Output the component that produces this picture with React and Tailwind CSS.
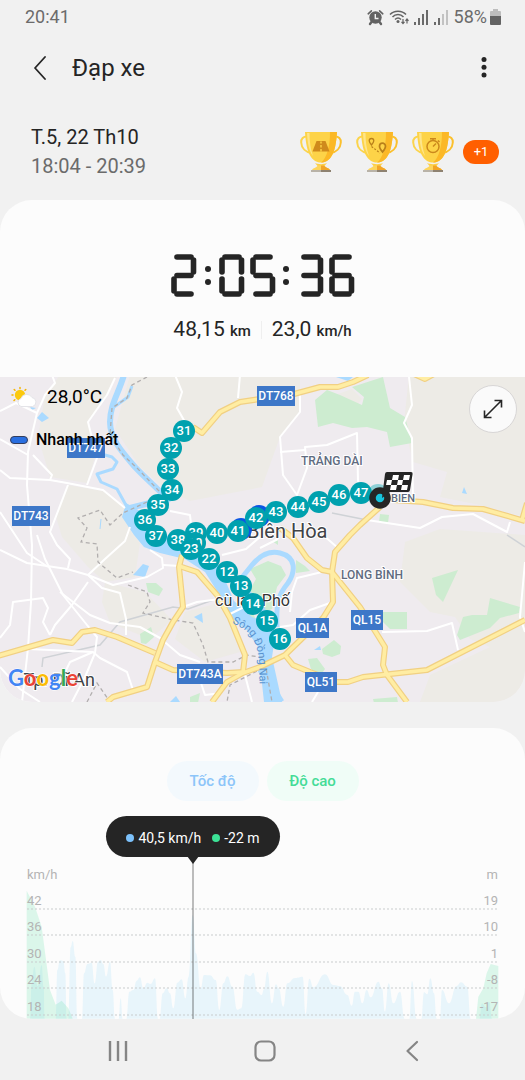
import { clsx } from 'clsx';

const SEGMENTS = {
  a: [6, 3, 20, 3],
  b: [22.5, 6, 22.5, 18],
  c: [22.5, 25, 22.5, 37],
  d: [6, 40, 20, 40],
  e: [3, 25, 3, 37],
  f: [3, 6, 3, 18],
  g: [6, 21.5, 20, 21.5],
};

const DIGITS = {
  0: 'abcdef',
  2: 'abdeg',
  3: 'abcdg',
  5: 'acdfg',
  6: 'acdefg',
};

const CLOCK = [
  { digit: 2, x: 0 },
  { digit: 0, x: 48 },
  { digit: 5, x: 79 },
  { digit: 3, x: 127 },
  { digit: 6, x: 158 },
];

const MINOR_ROADS = [
  'M52,-2 L55,6 45,18 37,36 28,75 27,108 32,168 31,225 28,271 22,325',
  'M0,93 L10,101 50,103 67,106 103,113 125,131',
  'M115,1 L107,18 88,45 97,81 87,108',
  'M0,62 L28,78 M33,78 L52,98 50,103',
  'M0,34 L16,26 37,36',
  'M68,108 L50,155 57,168 70,182 68,191',
  'M175,-2 L182,15 177,31 185,45',
  'M240,-2 L238,21',
  'M170,134 L190,138 192,155',
  'M0,173 L27,186 67,192 88,198 102,211 120,216 126,242 126,258',
  'M37,158 L45,182 63,218 87,248 97,260 95,276 85,300 72,325',
  'M0,135 L27,176 48,190',
  'M88,198 L105,182 125,164 130,150',
  'M88,198 L113,208 147,200 163,191 162,181 150,173',
  'M60,215 L90,238 110,246 140,250 160,261 180,278 200,285',
  'M88,205 L72,228 55,248 50,258',
  'M0,261 L10,248 13,225 43,221 48,231 43,245 50,258',
  'M28,272 L93,275 100,281 127,295 133,313',
  'M93,275 L70,285 58,310',
  'M163,188 L180,189',
  'M183,230 L197,225 220,222',
  'M245,298 L252,325',
  'M0,290 L20,312 40,325',
  'M200,303 L205,318 222,316',
  'M300,18 L300,35 280,60 283,98 297,118 307,91 305,70 327,68 357,56 358,105',
  'M280,75 L305,73',
  'M409,0 L412,28 404,46 412,61 413,125',
  'M367,143 L420,151 442,140 473,137 507,155 510,145',
  'M382,255 L427,254 452,246 458,273',
  'M525,185 L520,240 525,255',
  'M330,226 L310,233 293,248 280,250',
  'M322,195 L297,201 292,215 290,235',
  'M323,158 L338,171',
  'M260,171 L278,162',
  'M228,238 L244,230',
  'M318,315 L312,325',
  'M222,178 L246,172 260,160',
];

const MAIN_ROADS = [
  'M193,50 L202,56 220,35 240,25 260,22 294,17 320,10 338,10 353,5 368,-2',
  'M414,-3 L425,2 434,-3',
  'M393,123 L423,125 453,131 483,132 525,144',
  'M527,126 L522,143',
  'M380,130 L360,148 350,158 335,175 332,195 333,225 323,241 285,278 260,290 243,296 227,305 212,325',
  'M280,151 L293,161 307,181 322,193 332,195 360,230 385,270 383,288 387,298 407,325',
  'M285,278 L293,288 310,295 337,305 348,305 363,300 427,293 525,243',
  'M-2,279 L53,263 72,266 82,255 95,253 117,260 155,276',
  'M182,178 L179,190 183,230 173,245 163,263 155,285 147,310 130,315 113,320 107,325',
  'M179,189 L197,195 217,218 230,241 245,278 243,295',
  'M155,285 L173,293 227,296 243,295',
];

const DASHED_LINES = [
  'M147,0 L132,8 127,21 112,31 110,58 123,78 137,91 160,115',
  'M147,125 L123,136 110,148 100,133 78,141 87,151 81,165 97,167 98,185 117,201 133,195',
  'M128,208 L147,215 150,225 143,236 173,243 193,246 203,268 208,285 233,285 247,278 265,281',
  'M263,291 L230,308 227,325',
  'M87,325 L97,306 110,325',
  'M265,285 L272,325',
];

const RAILS = ['M42,290 L43,281 L100,268 120,245 173,230 188,232 213,223', 'M332,136 L367,143', 'M507,158 L525,170'];

const COUNTRYSIDE = [
  'M130,-2 L300,-2 300,35 280,60 262,110 190,124 165,112 140,90 115,52 Z',
  'M60,-2 L118,-2 105,20 88,45 95,80 87,106 50,100 38,60 45,18 Z',
  'M68,108 L103,114 125,131 128,150 140,166 135,200 105,205 88,190 62,160 56,140 Z',
  'M409,-2 L525,-2 525,140 480,128 440,120 447,95 413,85 404,46 Z',
  'M405,165 L440,152 525,158 525,325 420,325 430,298 490,270 470,262 455,240 430,235 400,205 Z',
  'M105,205 L145,215 172,243 150,262 110,246 102,225 Z',
  'M185,235 L222,225 240,275 205,285 175,262 Z',
  'M338,17 L352,12 362,22 357,28 343,22 Z',
];

const PARKS = [
  'M315,23 L327,13 340,18 362,28 364,20 352,10 383,0 390,31 405,40 412,66 390,70 387,55 367,50 352,51 333,46 318,50 Z',
  'M432,201 L458,193 443,225 436,218 Z',
  'M457,258 L463,240 472,238 487,238 490,221 520,230 519,236 500,241 490,251 460,263 Z',
  'M383,235 H407 V252 H390 L383,245 Z',
  'M380,137 L389,138 388,146 379,145 Z',
  'M322,272 L334,263 341,269 340,277 332,280 323,277 Z',
  'M308,282 L317,281 325,292 320,299 311,292 Z',
  'M250,192 L268,184 281,189 286,198 277,210 272,232 262,236 248,216 256,202 Z',
  'M236,232 L254,238 258,250 244,246 Z',
  'M146,206 L156,206 163,212 159,219 148,215 Z',
  'M140,257 L151,250 154,260 146,267 141,266 Z',
  'M296,183 L305,189 310,194 296,196 Z',
  'M272,164 L278,162 278,168 Z',
  'M373,322 L397,320 398,326 374,326 Z',
  'M190,320 L200,316 198,326 190,326 Z',
];

const PONDS = [
  'M37,41 L42,35 49,41 42,45 Z',
  'M133,198 L143,187 149,189 145,200 Z',
  'M194,240 L202,236 203,246 Z',
  'M462,116 L464,110 467,117 Z',
  'M314,273 L320,269 321,273 Z',
  'M170,325 L176,319 180,325 Z',
  'M336,0 L353,0 348,4 Z',
  'M30,30 L36,31 32,33 Z',
];

const SHIELDS = [
  { text: 'DT768', x: 257, y: 9, w: 38 },
  { text: 'DT747', x: 67, y: 61, w: 38 },
  { text: 'DT743', x: 12, y: 129, w: 38 },
  { text: 'DT743A', x: 177, y: 287, w: 46 },
  { text: 'QL1A', x: 296, y: 241, w: 33 },
  { text: 'QL15', x: 351, y: 233, w: 32 },
  { text: 'QL51', x: 305, y: 295, w: 32 },
];

const PINS = [
  { n: 31, x: 184, y: 54 },
  { n: 32, x: 171, y: 71 },
  { n: 33, x: 168, y: 92 },
  { n: 34, x: 172, y: 113 },
  { n: 35, x: 158, y: 128 },
  { n: 36, x: 145, y: 143 },
  { n: 37, x: 156, y: 159 },
  { n: 39, x: 196, y: 156 },
  { n: 10, x: 195, y: 166 },
  { n: 38, x: 178, y: 163 },
  { n: 40, x: 217, y: 156 },
  { n: 41, x: 238, y: 154 },
  { n: 42, x: 256, y: 141 },
  { n: 43, x: 276, y: 135 },
  { n: 44, x: 298, y: 130 },
  { n: 45, x: 319, y: 125 },
  { n: 46, x: 339, y: 118 },
  { n: 47, x: 361, y: 116 },
  { n: 23, x: 191, y: 172 },
  { n: 22, x: 209, y: 182 },
  { n: 12, x: 227, y: 195 },
  { n: 13, x: 241, y: 209 },
  { n: 14, x: 253, y: 227 },
  { n: 15, x: 267, y: 244 },
  { n: 16, x: 280, y: 262 },
];

// chart points are stored at 3x and scaled down inside the svg
const SPEED = [
  [[90, 476], [95, 370], [103, 320], [113, 378], [125, 315], [131, 380], [134, 476]],
  [[167, 476], [172, 330], [180, 301], [190, 303], [196, 340], [200, 476]],
  [[205, 476], [212, 262], [218, 243], [226, 290], [232, 476]],
  [[246, 476], [252, 340], [262, 312], [275, 308], [284, 370], [294, 305], [302, 300], [310, 312], [318, 350], [330, 305], [338, 390], [345, 476]],
  [[356, 476], [362, 415], [368, 476]],
  [[379, 476], [388, 395], [400, 390], [410, 362], [420, 352], [430, 385], [442, 368], [452, 372], [465, 355], [474, 476]],
  [
    [479, 476], [488, 400], [500, 385], [510, 400], [520, 445], [532, 368], [545, 358], [556, 415], [566, 350],
    [578, 165], [588, 280], [602, 385], [612, 345], [630, 346], [647, 360], [658, 450], [670, 370], [682, 349],
    [697, 380], [712, 449], [724, 445], [736, 343], [750, 348], [760, 338], [772, 395], [785, 405], [792, 388],
    [802, 335], [816, 430], [828, 373], [836, 385], [850, 440], [862, 370], [885, 354], [908, 350], [917, 462],
    [928, 356], [940, 382], [975, 343], [1000, 375], [1020, 378], [1042, 405], [1055, 437], [1065, 395],
    [1075, 395], [1087, 430], [1100, 390], [1112, 412], [1135, 365], [1146, 385], [1155, 455], [1166, 370],
    [1180, 430], [1200, 395], [1214, 476],
  ],
  [[1228, 476], [1236, 363], [1250, 476]],
  [[1264, 476], [1272, 397], [1282, 403], [1291, 355], [1302, 400], [1310, 476]],
  [[1320, 476], [1326, 390], [1347, 430], [1370, 378], [1383, 367], [1402, 380], [1412, 476]],
  [[1438, 476], [1446, 430], [1458, 442], [1468, 425], [1476, 476]],
];

const ALTITUDE = [
  [[80, 476], [80, 92], [105, 140], [125, 200], [150, 390], [167, 434], [185, 422], [205, 445], [218, 476]],
  [[1428, 476], [1435, 410], [1450, 385], [1460, 340], [1472, 312], [1495, 318], [1495, 476]],
];

const GRID = [
  { y: 50, left: '42', right: '19' },
  { y: 76, left: '36', right: '10' },
  { y: 103, left: '30', right: '1' },
  { y: 129, left: '24', right: '-8' },
  { y: 156, left: '18', right: '-17' },
];

function smooth(points) {
  return points.reduce((d, [x, y], i) => {
    if (i === 0) return `M${x},${y}`;
    const [px, py] = points[i - 1];
    const mid = (px + x) / 2;
    return `${d} C${mid},${py} ${mid},${y} ${x},${y}`;
  }, '') + ' Z';
}

function straight(points) {
  return `M${points.map(p => p.join(',')).join(' L')} Z`;
}

function Signal({ level }) {
  return (
    <svg viewBox="0 0 15 15" className="size-[15px]" fill="#6b6b6b">
      <rect x="0" y="12" width="2" height="3" />
      <rect x="4" y="8" width="2" height="7" />
      <rect x="8" y="4" width="2" height="11" opacity={level > 2 ? 1 : 0.35} />
      <rect x="12" y="0" width="2" height="15" opacity={level > 3 ? 1 : 0.35} />
    </svg>
  );
}

function StatusBar() {
  return (
    <div className="flex h-[34px] items-center justify-between pl-[25px] pr-6 text-lg text-[#6b6b6b]">
      <span>20:41</span>
      <div className="flex items-center gap-[5px]">
        <svg viewBox="0 0 17 17" className="size-[17px]" fill="none" stroke="#636363">
          <circle cx="8.5" cy="8.5" r="6.2" fill="#636363" stroke="none" />
          <path d="M1.2 4.8 L4.4 1.8 M15.8 4.8 L12.6 1.8" strokeWidth="1.6" strokeLinecap="round" />
          <path d="M4.5 13 L3 15 M12.5 13 L14 15" strokeWidth="2.4" strokeLinecap="round" />
          <path d="M8.3 5 V9.5 H11.5" stroke="#f1f1f1" strokeWidth="1.4" />
        </svg>
        <svg viewBox="0 0 20 17" className="h-[17px] w-5" fill="none" stroke="#636363" strokeWidth="1.5">
          <path d="M1 5.5 C5 1 13 1 17 5.5 M3.5 8 C6.5 4.8 11.5 4.8 14.5 8 M6 10.5 C8 8.5 10 8.5 12 10.5" />
          <circle cx="9" cy="12.5" r="1.5" fill="#636363" stroke="none" />
          <path d="M14 10 V14 M12.5 12.8 L14 14.5 L15.5 12.8 M18 14.5 V10.5 M16.5 11.8 L18 10 L19.5 11.8" strokeWidth="1.2" />
        </svg>
        <Signal level={4} />
        <Signal level={2} />
        <div className="flex items-center gap-[3px]">
          <span>58%</span>
          <svg viewBox="0 0 11 16" className="h-4 w-[11px]">
            <path d="M3 0 H8 V2 H10 Q11 2 11 3 V7 H0 V3 Q0 2 1 2 H3 Z" fill="#bdbdbd" />
            <path d="M0 7 H11 V15 Q11 16 10 16 H1 Q0 16 0 15 Z" fill="#636363" />
          </svg>
        </div>
      </div>
    </div>
  );
}

function Header() {
  return (
    <header className="flex h-[67px] items-center pl-[34px] pr-[31px]">
      <button aria-label="Back" className="mr-[26px]">
        <svg viewBox="0 0 12 24" className="h-6 w-3" fill="none" stroke="#252525" strokeWidth="1.8" strokeLinecap="round" strokeLinejoin="round">
          <path d="M11 1 L1 12 L11 23" />
        </svg>
      </button>
      <h1 className="text-2xl text-[#252525]">Đạp xe</h1>
      <button aria-label="Menu" className="ml-auto">
        <svg viewBox="0 0 20 22" className="h-[22px] w-5" fill="#252525">
          <circle cx="10" cy="2.5" r="2.5" />
          <circle cx="10" cy="10.3" r="2.5" />
          <circle cx="10" cy="18" r="2.5" />
        </svg>
      </button>
    </header>
  );
}

function Trophy({ children }) {
  return (
    <svg viewBox="0 0 42 42" className="size-[42px]">
      <g fill="none" strokeWidth="2">
        <path d="M8 5.5 C3 5 1 8 1.2 11.5 C1.5 17.5 6 21 11 22" stroke="#fbd44c" />
        <path d="M34 5.5 C39 5 41 8 40.8 11.5 C40.5 17.5 36 21 31 22" stroke="#fbc02d" />
      </g>
      <path d="M5 1 H37 C36.5 10 35 21 31 26 C28 30 25 31.5 21 31.5 C17 31.5 14 30 11 26 C7 21 5.5 10 5 1 Z" fill="#fdd348" />
      <path d="M30 1 H37 C36.5 10 35 21 31 26 C28 30 25 31.5 21 31.5 C27 27 30 15 30 1 Z" fill="#fbb827" />
      <path d="M7 2 C7.5 12 9 20 13 25 C10.5 18 9.5 10 9.5 2 Z" fill="#fee58a" />
      <path d="M15 32 C18 33.5 24 33.5 27 32 L24 35.5 H18 Z" fill="#fdcf45" />
      <path d="M18 34.5 H24 C26 37 29 37 30 39 H12 C13 37 16 37 18 34.5 Z" fill="#fdd55b" />
      <path d="M21 34.5 H24 C26 37 29 37 30 39 H21 Z" fill="#f2a527" />
      <path d="M11 39 H31 V41 H11 Z" fill="#b9b3a8" />
      <path d="M21 39 H31 V41 H21 Z" fill="#8e8271" />
      {children}
    </svg>
  );
}

function Summary() {
  return (
    <section className="flex h-[99px] items-start justify-between pl-[31px] pr-[26px] pt-[22px]">
      <div className="text-xl leading-[29px]">
        <p className="text-[#252525]">T.5, 22 Th10</p>
        <p className="text-[#6b6b6b]">18:04 - 20:39</p>
      </div>
      <div className="flex h-[58px] items-center gap-[9px]">
        <div className="flex gap-[14px]">
          <Trophy>
            <path d="M16.5 10 H25.5 L29.5 20.5 H12.5 Z" fill="#cf8a1c" />
            <path d="M21 10.5 V12.5 M21 14 V16.5 M21 18 V20.5" stroke="#fdd348" strokeWidth="1.4" />
          </Trophy>
          <Trophy>
            <g fill="none" stroke="#b9801a">
              <path d="M15.5 14 C13.5 11.5 13.2 10.5 13.2 9.8 A2.3 2.3 0 0 1 17.8 9.8 C17.8 10.5 17.5 11.5 15.5 14 Z" strokeWidth="1.3" />
              <path d="M26.5 21 C23.8 17.5 23.5 16.5 23.5 15.2 A3 3 0 0 1 29.5 15.2 C29.5 16.5 29.2 17.5 26.5 21 Z" strokeWidth="1.7" />
              <path d="M15.5 15.5 L24 22" strokeWidth="1.2" strokeDasharray="2 1.5" />
            </g>
          </Trophy>
          <Trophy>
            <g fill="none" stroke="#cb881c" strokeWidth="1.5">
              <circle cx="21" cy="15.5" r="6" />
              <path d="M21 15.5 L24 12.5 M18 7.8 H24 M21 8 V9.5 M26 9.5 L27.5 11" />
            </g>
          </Trophy>
        </div>
        <span className="grid h-6 w-9 place-items-center rounded-full bg-[#ff5f00] text-[13px] text-white">+1</span>
      </div>
    </section>
  );
}

function Clock() {
  return (
    <svg role="img" aria-label="2:05:36" viewBox="0 0 184 43" className="h-[43px] w-[184px]" stroke="#252525" strokeWidth="5.6" strokeLinecap="round">
      {CLOCK.map(({ digit, x }) => (
        <g key={x} transform={`translate(${x} 0)`}>
          {DIGITS[digit].split('').map(s => {
            const [x1, y1, x2, y2] = SEGMENTS[s];
            return <line key={s} x1={x1} y1={y1} x2={x2} y2={y2} />;
          })}
        </g>
      ))}
      {[37, 115].map(x => (
        <g key={x} fill="#252525" stroke="none">
          <circle cx={x} cy="15" r="3" />
          <circle cx={x} cy="28" r="3" />
        </g>
      ))}
    </svg>
  );
}

function Stat({ value, unit }) {
  return (
    <p className="text-[21px] leading-7">
      {value} <span className="text-[15px] font-medium">{unit}</span>
    </p>
  );
}

function RouteMap() {
  return (
    <div className="relative">
      <svg viewBox="0 0 525 325" className="block w-full bg-[#efebef]">
        <g fill="#edebe6">{COUNTRYSIDE.map(d => <path key={d} d={d} />)}</g>
        <g fill="#cdecd0">{PARKS.map(d => <path key={d} d={d} />)}</g>
        <g fill="none" stroke="#aadaff" strokeLinejoin="round">
          <path d="M124,-2 C118,18 110,28 110,45 C110,62 122,75 135,90 C148,104 162,115 170,125" strokeWidth="6" />
          <path d="M132,9 L128,20 114,30" strokeWidth="3" />
          <path d="M98,76 L112,80 117,85 113,92 97,97 101,105 117,112 127,130" strokeWidth="3" />
          <path d="M126,132 L150,126 168,120" strokeWidth="6" />
          <path d="M100,152 L101,142" strokeWidth="1" />
          <path d="M236,208 L252,188 C262,176 272,174 280,176 C296,180 296,194 288,206 C278,218 276,226 277,250" strokeWidth="5" />
          <path d="M268,255 L264,238 C262,225 250,220 240,208" strokeWidth="6" />
          <path d="M258,288 L281,325" strokeWidth="7" />
        </g>
        <path d="M126,126 L140,134 165,158 200,168 214,180 226,205 234,224 252,240 268,246 276,255 272,280 282,325 264,325 258,270 246,252 230,240 222,222 205,195 185,182 160,176 144,170 134,158 122,140 Z" fill="#aadaff" />
        <g fill="#aadaff">{PONDS.map(d => <path key={d} d={d} />)}</g>
        <g fill="none" stroke="#cfd2d6" strokeWidth="1.5">{RAILS.map(d => <path key={d} d={d} />)}</g>
        <g fill="none" stroke="#fff" strokeWidth="2" strokeLinejoin="round">{MINOR_ROADS.map(d => <path key={d} d={d} />)}</g>
        <g fill="none" stroke="#b1aeae" strokeWidth="1.3" strokeDasharray="4 3">{DASHED_LINES.map(d => <path key={d} d={d} />)}</g>
        <g fill="none" stroke="#f1d083" strokeWidth="6" strokeLinejoin="round">{MAIN_ROADS.map(d => <path key={d} d={d} />)}</g>
        <g fill="none" stroke="#ffeda3" strokeWidth="3.6" strokeLinejoin="round">{MAIN_ROADS.map(d => <path key={d} d={d} />)}</g>

        <path id="river" d="M232,246 C250,254 257,262 259,285 L260,325" fill="none" />
        <text className="text-[11px]" fill="#5a93cf">
          <textPath href="#river">Sông Đồng Nai</textPath>
        </text>

        {SHIELDS.map(s => (
          <g key={s.text}>
            <rect x={s.x} y={s.y} width={s.w} height="20" fill="#3d77c8" />
            <text x={s.x + s.w / 2} y={s.y + 14} textAnchor="middle" fill="#fff" className="text-xs font-medium">{s.text}</text>
          </g>
        ))}
        <g stroke="#fff" strokeWidth="2" strokeLinejoin="round" paintOrder="stroke">
          <text x="301" y="88" fill="#5f6b80" className="text-xs font-medium">TRẢNG DÀI</text>
          <text x="341" y="202" fill="#5f6b80" className="text-xs font-medium">LONG BÌNH</text>
          <text x="391" y="125" fill="#5f6b80" className="text-[11px] font-medium">BIEN</text>
          <text x="247" y="161" fill="#404246" className="text-xl">Biên Hòa</text>
          <text x="215" y="229" fill="#333" className="text-base">cù lao Phố</text>
          <text x="95" y="309" textAnchor="end" fill="#404246" className="text-lg">Tp. Dĩ An</text>
        </g>

        <circle cx="378" cy="118" r="11" fill="#8fd0d6" />
        <g fill="#0b57e3">
          <circle cx="241" cy="152" r="11" />
          <circle cx="259" cy="139" r="11" />
        </g>
        {PINS.map(p => (
          <g key={p.n}>
            <circle cx={p.x} cy={p.y} r="11" fill="#00a1ae" />
            <text x={p.x} y={p.y + 4} textAnchor="middle" fill="#fff" className="text-[13px] font-medium">{p.n}</text>
          </g>
        ))}

        <circle cx="380" cy="121" r="7.5" fill="#17c3dc" stroke="#252525" strokeWidth="6.5" />
        <path d="M387,95 H411 Q413,95 412.6,97 L410,113 Q409.7,115 408,115 H390 L382,121 L385,97 Q385.3,95 387,95 Z" fill="#252525" />
        <g fill="#fff">
          <path d="M393,98 H399 L398,103 H392 Z M404,98 H410 L409,103 H403 Z" />
          <path d="M387,103 H392 L391,108 H386 Z M398,103 H403 L402,108 H397 Z" />
          <path d="M391,108 H397 L396,113 H390 Z M402,108 H408 L407,113 H401 Z" />
        </g>

        <text x="8" y="309" stroke="#fff" strokeWidth="1" paintOrder="stroke" className="font-[Lato,sans-serif] text-[22px] font-bold">
          <tspan fill="#4285f4">G</tspan>
          <tspan fill="#ea4335">o</tspan>
          <tspan fill="#fbbc05">o</tspan>
          <tspan fill="#4285f4">g</tspan>
          <tspan fill="#34a853">l</tspan>
          <tspan fill="#ea4335">e</tspan>
        </text>
      </svg>

      <div className="absolute left-[10px] top-[6px] text-black">
        <div className="flex items-center gap-[9px]">
          <svg viewBox="0 0 28 24" className="h-6 w-7">
            <g stroke="#f4b400" strokeWidth="1.5" strokeLinecap="round">
              <path d="M10 2.5 V3.5 M2 10 H3 M4.2 4.5 L5 5.3 M4 15.5 L4.8 14.7 M15.8 4.5 L15 5.3" />
            </g>
            <circle cx="10" cy="10" r="5.2" fill="#fbc90e" />
            <path d="M11 21.5 A4.2 4.2 0 0 1 11 13.5 A6 6 0 0 1 22 12.5 A4.6 4.6 0 0 1 22.5 21.5 Z" fill="#fff" stroke="#e4e4e8" />
          </svg>
          <span className="text-[19px] leading-7">28,0°C</span>
        </div>
        <div className="mt-[17px] flex items-center gap-2">
          <span className="h-2 w-[18px] rounded-full border border-[#333d5c] bg-[#2a6fe0]" />
          <span className="text-base font-medium leading-6">Nhanh nhất</span>
        </div>
      </div>

      <button aria-label="Expand" className="absolute right-2 top-2 grid size-12 place-items-center rounded-full border border-[#d8d6d6] bg-[#fafafa]">
        <svg viewBox="0 0 20 20" className="size-5" fill="none" stroke="#252525" strokeWidth="1.6">
          <path d="M1.5 18.5 L18.5 1.5 M11.5 1.5 H18.5 V8.5 M8.5 18.5 H1.5 V11.5" />
        </svg>
      </button>
    </div>
  );
}

function Pill({ tone, children }) {
  return (
    <button
      className={clsx(
        'h-10 w-[92px] rounded-full text-[15px] font-medium',
        tone === 'blue' ? 'bg-[#f3f9fd] text-[#8cc5f9]' : 'bg-[#f0fdf7] text-[#45dc97]'
      )}
    >
      {children}
    </button>
  );
}

function SpeedChart() {
  return (
    <svg viewBox="0 0 525 160" className="mt-[2px] block w-full">
      <g transform="translate(0 1) scale(.33333)">
        {SPEED.map(p => <path key={p[0][0]} d={smooth(p)} fill="#5bc6fa" opacity=".12" />)}
        {ALTITUDE.map(p => <path key={p[0][0]} d={straight(p)} fill="#3edc94" opacity=".17" strokeLinejoin="round" />)}
      </g>
      <g fill="#b4b4b4" className="text-[13px]">
        <text x="27" y="20">km/h</text>
        <text x="498" y="20" textAnchor="end">m</text>
        {GRID.map(g => (
          <g key={g.y}>
            <line x1="27" x2="498" y1={g.y} y2={g.y} stroke="#c9cccd" strokeDasharray="2 2" />
            <text x="27" y={g.y - 4}>{g.left}</text>
            <text x="498" y={g.y - 4} textAnchor="end">{g.right}</text>
          </g>
        ))}
      </g>
      <line x1="193" x2="193" y1="0" y2="160" stroke="#252525" strokeOpacity=".4" strokeWidth="1.5" />
    </svg>
  );
}

function NavBar() {
  return (
    <nav className="grid h-[61px] grid-cols-3 place-items-center pl-11 pr-10 pt-[2px]">
      <button aria-label="Recents">
        <svg viewBox="0 0 24 24" className="size-6" stroke="#858585" strokeWidth="2.4">
          <path d="M4 2 V22 M12 2 V22 M20 2 V22" />
        </svg>
      </button>
      <button aria-label="Home">
        <svg viewBox="0 0 24 24" className="size-6" fill="none" stroke="#858585" strokeWidth="2.2">
          <rect x="2.5" y="2.5" width="19" height="19" rx="5.5" />
        </svg>
      </button>
      <button aria-label="Back">
        <svg viewBox="0 0 24 24" className="size-6" fill="none" stroke="#858585" strokeWidth="2.2" strokeLinecap="round" strokeLinejoin="round">
          <path d="M17 3 L7.5 12 L17 21" />
        </svg>
      </button>
    </nav>
  );
}

export default function App() {
  return (
    <div className="flex min-h-screen flex-col bg-[#f1f1f1] font-[Roboto,sans-serif]">
      <StatusBar />
      <Header />
      <Summary />
      <main className="flex flex-col gap-[26px]">
        <section className="overflow-hidden rounded-[32px] bg-[#fcfcfc]">
          <div className="flex flex-col items-center pb-8 pt-[54px] text-[#252525]">
            <Clock />
            <div className="mt-[18px] flex items-center gap-[10px]">
              <Stat value="48,15" unit="km" />
              <span className="h-[18px] w-px bg-[#efefef]" />
              <Stat value="23,0" unit="km/h" />
            </div>
          </div>
          <RouteMap />
        </section>

        <section className="overflow-hidden rounded-[32px] bg-[#fcfcfc] pt-[33px]">
          <div className="flex justify-center gap-2">
            <Pill tone="blue">Tốc độ</Pill>
            <Pill tone="green">Độ cao</Pill>
          </div>
          <div className="relative ml-[106px] mt-[15px] flex h-[41px] w-[174px] items-center justify-center gap-[11px] rounded-full bg-[#252525] pt-[2px] text-sm text-white">
            <span className="flex items-center gap-1">
              <i className="size-2 rounded-full bg-[#7cc1fb]" />
              40,5 km/h
            </span>
            <span className="flex items-center gap-1">
              <i className="size-2 rounded-full bg-[#3ce296]" />
              -22 m
            </span>
            <svg viewBox="0 0 12 8" className="absolute left-[81px] top-10 h-2 w-3" fill="#252525">
              <path d="M0 0 H12 L6 8 Z" />
            </svg>
          </div>
          <SpeedChart />
        </section>
      </main>
      <NavBar />
    </div>
  );
}
